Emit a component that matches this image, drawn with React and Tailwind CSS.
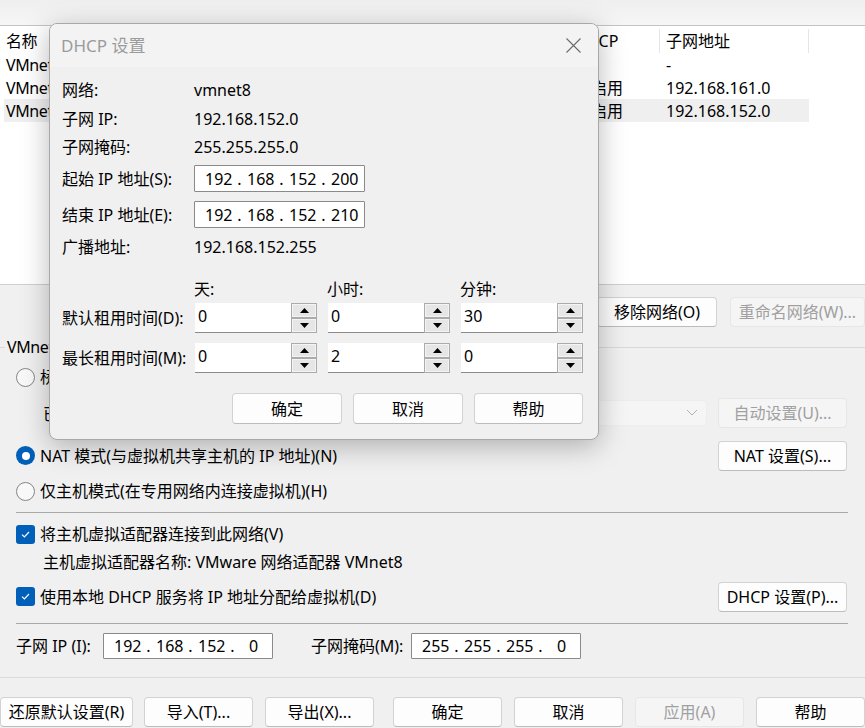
import React from 'react';

function Btn({ children, className = '', disabled }) {
  return (
    <button
      className={`h-[30px] flex items-center justify-center rounded-[4px] border text-[16px] leading-none ${
        disabled
          ? 'bg-[#f5f5f5] border-[#e6e6e6] text-[#a0a0a0]'
          : 'bg-[#fdfdfd] border-[#d2d2d2] border-b-[#bcbcbc] text-black'
      } ${className}`}
    >
      {children}
    </button>
  );
}

function Radio({ checked }) {
  if (checked) {
    return (
      <span className="w-[19px] h-[19px] shrink-0 rounded-full bg-[#005fb8] flex items-center justify-center">
        <span className="w-[8px] h-[8px] rounded-full bg-white" />
      </span>
    );
  }
  return <span className="w-[19px] h-[19px] shrink-0 rounded-full border border-[#858585] bg-[#f8f8f8]" />;
}

function Check() {
  return (
    <span className="w-[19px] h-[19px] shrink-0 rounded-[3px] bg-[#005fb8] flex items-center justify-center">
      <svg width="9" height="7" viewBox="0 0 9 7" fill="none">
        <path d="M1 3.6 L3.4 6 L8 1" stroke="white" strokeWidth="1.2" />
      </svg>
    </span>
  );
}

function IpField({ parts, className = '' }) {
  return (
    <div className={`flex items-center bg-white border border-[#8a8a8a] rounded-[1px] pl-[10px] text-[16px] ${className}`}>
      {parts.map((p, i) => (
        <React.Fragment key={i}>
          {i > 0 && <span className="w-[15px] text-center">.</span>}
          <span className="w-[27px] text-center">{p}</span>
        </React.Fragment>
      ))}
    </div>
  );
}

function SpinHalf({ up }) {
  return (
    <div className="h-[15px] border border-[#ababab] bg-[#e6e6e6] shadow-[inset_0_0_0_1px_#f4f4f4] flex items-center justify-center">
      <svg width="9" height="5" viewBox="0 0 9 5">
        {up ? <polygon points="4.5,0 9,5 0,5" fill="#000" /> : <polygon points="0,0 9,0 4.5,5" fill="#000" />}
      </svg>
    </div>
  );
}

function Spin({ value }) {
  return (
    <div className="flex h-[30px] w-[122px]">
      <div className="flex-1 bg-white border-b border-[#8a8a8a] pl-[3px] pb-[4px] flex items-center text-[16px]">{value}</div>
      <div className="w-[26px] flex flex-col">
        <SpinHalf up />
        <SpinHalf />
      </div>
    </div>
  );
}

// only the columns that peek out beside the dialog carry text
const rows = [
  ['VMnet0', '-', '-'],
  ['VMnet1', '已启用', '192.168.161.0'],
  ['VMnet8', '已启用', '192.168.152.0'],
];

function Cols({ cells, header }) {
  return (
    <>
      <div className="w-[566px] pl-[2px] whitespace-nowrap overflow-hidden tracking-[-0.4px]">{cells[0]}</div>
      <div className={`w-[90px] pl-[5px] whitespace-nowrap overflow-hidden ${header ? 'border-r border-[#e5e5e5] h-[24px] flex items-center' : ''}`}>{cells[1]}</div>
      <div className={`w-[149px] pl-[6px] whitespace-nowrap overflow-hidden ${header ? 'border-r border-[#e5e5e5] h-[24px] flex items-center' : ''}`}>{cells[2]}</div>
    </>
  );
}

function DhcpDialog() {
  return (
    <div className="absolute left-[49px] top-[23px] w-[550px] h-[417px] flex flex-col rounded-[8px] border border-[#a8a8a8] overflow-hidden bg-[#f0f0f0] shadow-[0_6px_28px_rgba(0,0,0,0.28)]">
      <div className="h-[43px] bg-[#f3f3f3] flex items-center justify-between pl-[11px] pr-[17px] shrink-0">
        <span className="text-[17px] text-[#9b9b9b]">DHCP 设置</span>
        <svg width="15" height="15" viewBox="0 0 15 15">
          <path d="M0.5 0.5 L14.5 14.5 M14.5 0.5 L0.5 14.5" stroke="#6b6b6b" strokeWidth="1.1" />
        </svg>
      </div>
      <div className="flex flex-col pl-[12px] pr-[15px] text-[16px]">
        <div className="mt-[11px] h-[24px] flex items-center">
          <span className="w-[132px]">网络:</span>
          <span>vmnet8</span>
        </div>
        <div className="mt-[5px] h-[24px] flex items-center">
          <span className="w-[132px]">子网 IP:</span>
          <span>192.168.152.0</span>
        </div>
        <div className="mt-[4px] h-[24px] flex items-center">
          <span className="w-[132px]">子网掩码:</span>
          <span>255.255.255.0</span>
        </div>
        <div className="mt-[6px] h-[27px] flex items-center">
          <span className="w-[132px]">起始 IP 地址(S):</span>
          <IpField parts={['192', '168', '152', '200']} className="w-[171px] h-[27px]" />
        </div>
        <div className="mt-[9px] h-[27px] flex items-center">
          <span className="w-[132px]">结束 IP 地址(E):</span>
          <IpField parts={['192', '168', '152', '210']} className="w-[171px] h-[27px]" />
        </div>
        <div className="mt-[7px] h-[24px] flex items-center">
          <span className="w-[132px]">广播地址:</span>
          <span>192.168.152.255</span>
        </div>
        <div className="mt-[18px] h-[24px] flex items-center">
          <span className="w-[132px]" />
          <div className="flex gap-[11px]">
            <span className="w-[122px]">天:</span>
            <span className="w-[122px]">小时:</span>
            <span className="w-[122px]">分钟:</span>
          </div>
        </div>
        <div className="mt-[2px] h-[30px] flex items-center">
          <span className="w-[133px]">默认租用时间(D):</span>
          <div className="flex gap-[11px]">
            <Spin value="0" />
            <Spin value="0" />
            <Spin value="30" />
          </div>
        </div>
        <div className="mt-[10px] h-[30px] flex items-center">
          <span className="w-[133px]">最长租用时间(M):</span>
          <div className="flex gap-[11px]">
            <Spin value="0" />
            <Spin value="2" />
            <Spin value="0" />
          </div>
        </div>
        <div className="mt-[20px] flex justify-end gap-[11px]">
          <Btn className="w-[110px] h-[31px]">确定</Btn>
          <Btn className="w-[110px] h-[31px]">取消</Btn>
          <Btn className="w-[109px] h-[31px]">帮助</Btn>
        </div>
      </div>
    </div>
  );
}

export default function App() {
  return (
    <div className="relative w-[865px] h-[728px] overflow-hidden bg-[#f0f0f0] text-black text-[16px] font-['Noto_Sans','Noto_Sans_CJK_SC',sans-serif]">
      {/* top strip */}
      <div className="h-[26px] bg-gradient-to-b from-[#efefef] to-[#f6f6f6] border-b border-[#c4c4c4]" />

      {/* network list */}
      <div className="h-[259px] bg-white border-b border-[#cfcfcf] flex flex-col">
        <div className="h-[27px] pt-[3px] ml-[4px] flex items-center">
          <Cols header cells={['名称', 'DHCP', '子网地址']} />
        </div>
        {rows.map((r, i) => (
          <div key={i} className={`h-[23px] ml-[4px] w-[805px] flex items-center ${i === 2 ? 'bg-[#efefef]' : ''}`}>
            <Cols cells={r} />
          </div>
        ))}
      </div>

      {/* list buttons */}
      <div className="mt-[12px] flex justify-end gap-[13px]">
        <Btn className="w-[120px]">移除网络(O)</Btn>
        <Btn disabled className="w-[135px]">重命名网络(W)...</Btn>
      </div>

      {/* group box title */}
      <div className="mt-[10px] h-[20px] flex items-center">
        <div className="w-[5px] h-px bg-[#d9d9d9]" />
        <span className="px-[2px] tracking-[-0.4px] whitespace-nowrap">VMnet</span>
        <div className="flex-1 h-px bg-[#d9d9d9]" />
      </div>

      <div className="mt-[8px] h-[24px] pl-[16px] flex items-center gap-[5px]">
        <Radio />
        <span>桥接模式</span>
      </div>

      <div className="mt-[9px] h-[29px] pl-[43px] pr-[18px] flex items-center">
        <span className="pt-[3px]">已</span>
        <div className="ml-[12px] flex-1 h-[26px] rounded-[4px] bg-[#f5f5f5] border border-[#ededed] flex items-center justify-end pr-[8px]">
          <svg width="12" height="7" viewBox="0 0 12 7" fill="none">
            <path d="M1 1 L6 6 L11 1" stroke="#b0b0b0" strokeWidth="1" />
          </svg>
        </div>
        <Btn disabled className="ml-[11px] w-[129px] h-[29px]">自动设置(U)...</Btn>
      </div>

      <div className="mt-[14px] h-[29px] pl-[16px] pr-[18px] flex items-center">
        <Radio checked />
        <span className="ml-[5px] flex-1">NAT 模式(与虚拟机共享主机的 IP 地址)(N)</span>
        <Btn className="w-[129px] h-[29px]">NAT 设置(S)...</Btn>
      </div>

      <div className="mt-[9px] h-[24px] pl-[16px] flex items-center gap-[5px]">
        <Radio />
        <span>仅主机模式(在专用网络内连接虚拟机)(H)</span>
      </div>

      <div className="mt-[9px] ml-[16px] mr-[17px] h-px bg-[#a9a9a9]" />

      <div className="mt-[9px] h-[24px] pl-[16px] flex items-center gap-[5px]">
        <Check />
        <span>将主机虚拟适配器连接到此网络(V)</span>
      </div>

      <div className="mt-[4px] h-[24px] pl-[43px] flex items-center">主机虚拟适配器名称: VMware 网络适配器 VMnet8</div>

      <div className="mt-[8px] h-[29px] pl-[16px] pr-[18px] flex items-center">
        <Check />
        <span className="ml-[5px] flex-1">使用本地 DHCP 服务将 IP 地址分配给虚拟机(D)</span>
        <Btn className="w-[129px] h-[29px]">DHCP 设置(P)...</Btn>
      </div>

      <div className="mt-[12px] ml-[16px] mr-[17px] h-px bg-[#a9a9a9]" />

      <div className="mt-[9px] h-[26px] pl-[16px] flex items-center">
        <span className="w-[87px]">子网 IP (I):</span>
        <IpField parts={['192', '168', '152', '0']} className="w-[170px] h-[26px]" />
        <span className="ml-[38px] w-[100px]">子网掩码(M):</span>
        <IpField parts={['255', '255', '255', '0']} className="w-[170px] h-[26px]" />
      </div>

      <div className="mt-[18px] h-px bg-[#dadada]" />

      <div className="mt-[19px] flex">
        <Btn className="w-[133px]">还原默认设置(R)</Btn>
        <Btn className="ml-[11px] w-[109px]">导入(T)...</Btn>
        <Btn className="ml-[12px] w-[109px]">导出(X)...</Btn>
        <Btn className="ml-[19px] w-[109px]">确定</Btn>
        <Btn className="ml-[12px] w-[109px]">取消</Btn>
        <Btn disabled className="ml-[12px] w-[109px]">应用(A)</Btn>
        <Btn className="ml-[12px] w-[109px]">帮助</Btn>
      </div>

      <DhcpDialog />
    </div>
  );
}
